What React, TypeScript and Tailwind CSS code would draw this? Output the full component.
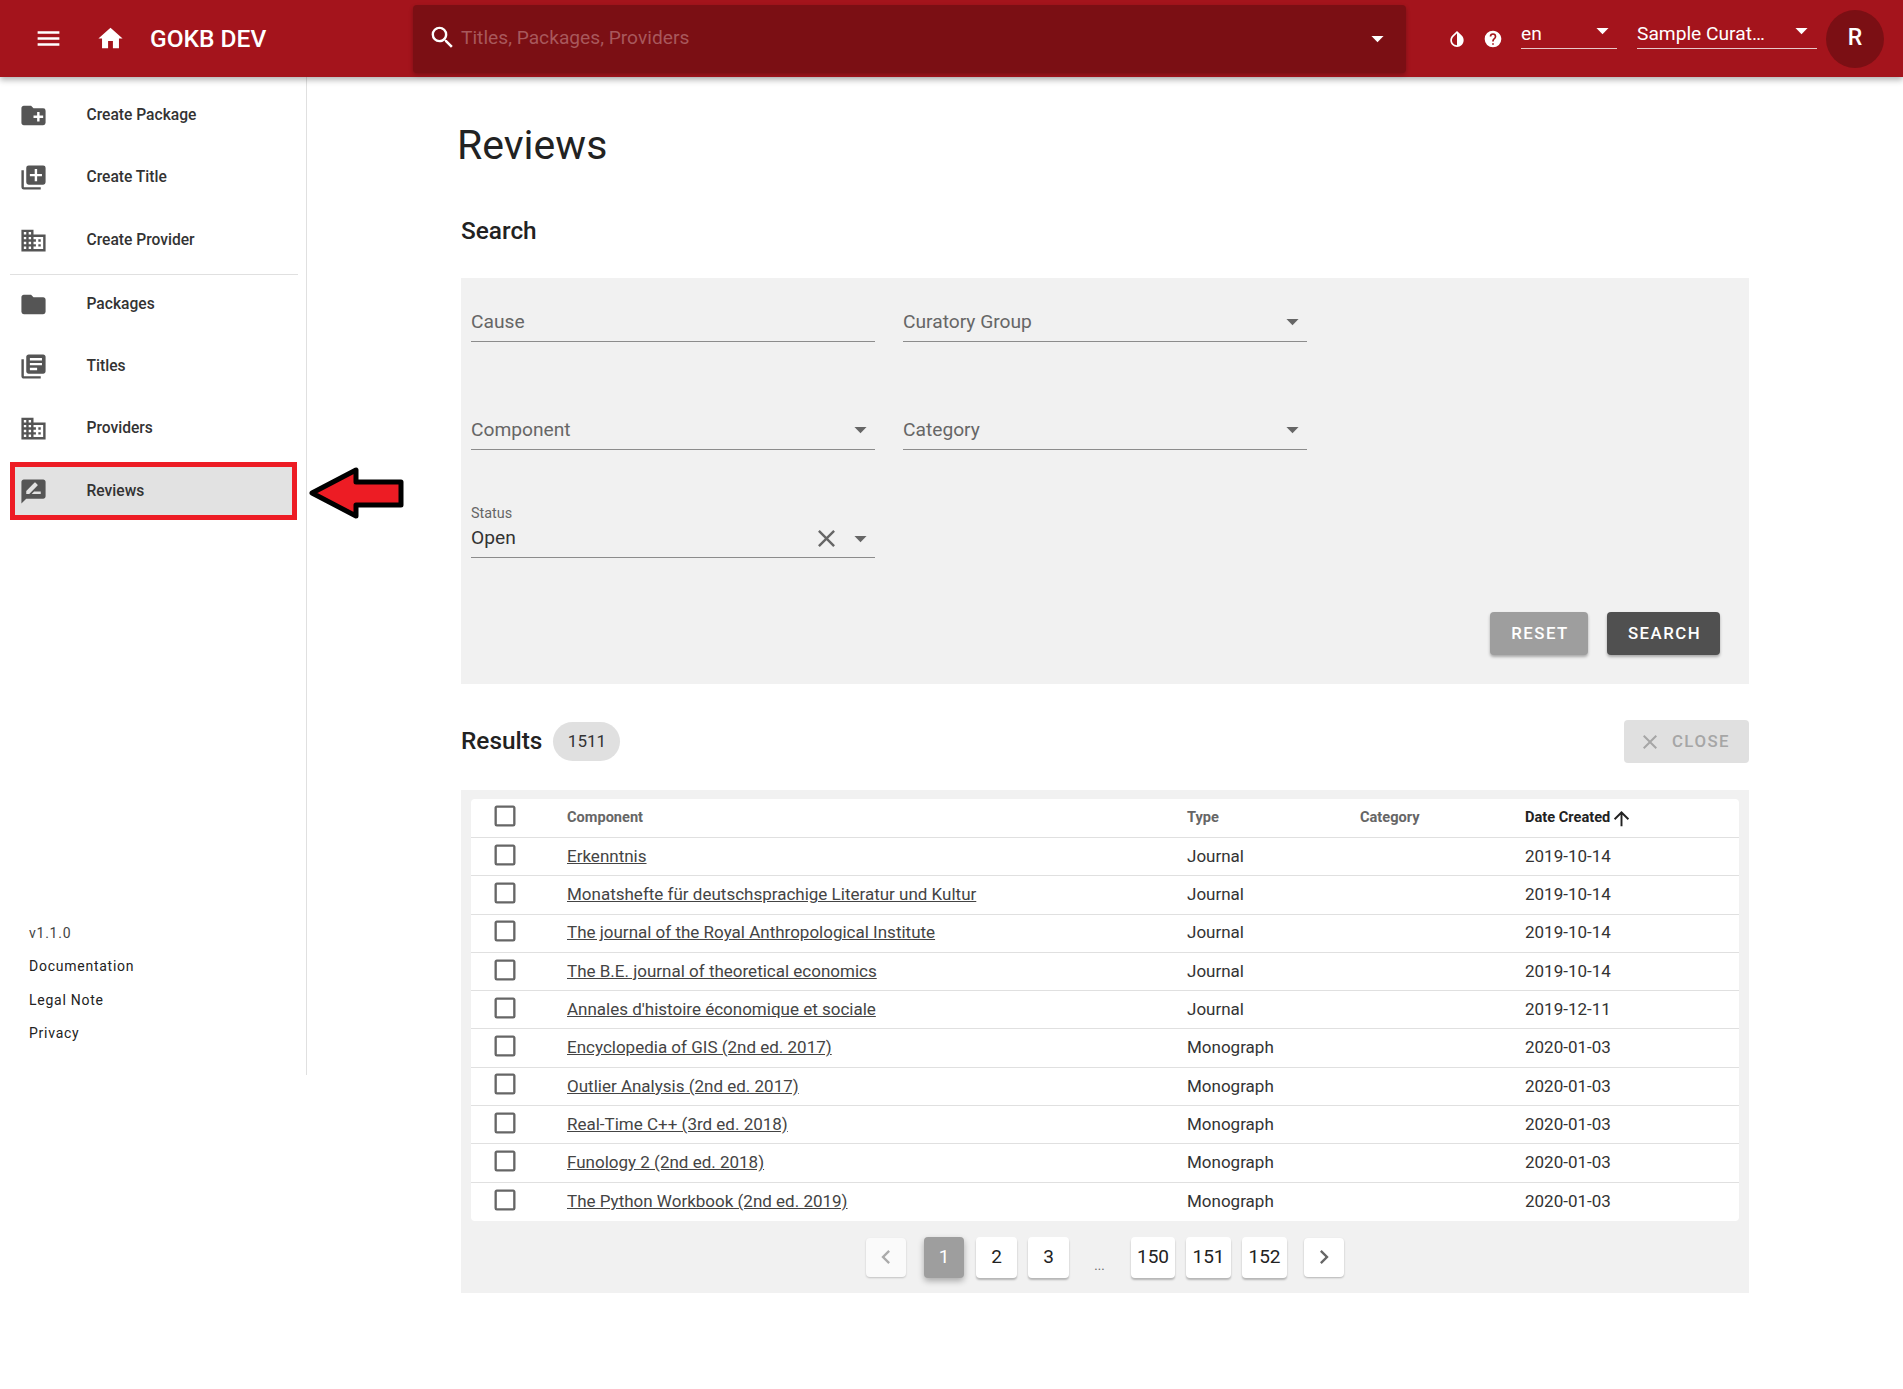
import type { ReactNode } from 'react';

const ICONS = {
  menu: 'M3,6H21V8H3V6M3,11H21V13H3V11M3,16H21V18H3V16Z',
  home: 'M10,20V14H14V20H19V12H22L12,3L2,12H5V20H10Z',
  magnify: 'M9.5,3A6.5,6.5 0 0,1 16,9.5C16,11.11 15.41,12.59 14.44,13.73L14.71,14H15.5L20.5,19L19,20.5L14,15.5V14.71L13.73,14.44C12.59,15.41 11.11,16 9.5,16A6.5,6.5 0 0,1 3,9.5A6.5,6.5 0 0,1 9.5,3M9.5,5C7,5 5,7 5,9.5C5,12 7,14 9.5,14C12,14 14,12 14,9.5C14,7 12,5 9.5,5Z',
  menuDown: 'M7,10L12,15L17,10H7Z',
  folderPlus: 'M10,4L12,6H20A2,2 0 0,1 22,8V18A2,2 0 0,1 20,20H4C2.89,20 2,19.1 2,18V6C2,4.89 2.89,4 4,4H10M15,9V12H12V14H15V17H17V14H20V12H17V9H15Z',
  libraryPlus: 'M19,11H15V15H13V11H9V9H13V5H15V9H19M20,2H8A2,2 0 0,0 6,4V16A2,2 0 0,0 8,18H20A2,2 0 0,0 22,16V4A2,2 0 0,0 20,2M4,6H2V20A2,2 0 0,0 4,22H18V20H4V6Z',
  domain: 'M18,15H16V17H18M18,11H16V13H18M20,19H12V17H14V15H12V13H14V11H12V9H20M10,7H8V5H10M10,11H8V9H10M10,15H8V13H10M10,19H8V17H10M6,7H4V5H6M6,11H4V9H6M6,15H4V13H6M6,19H4V17H6M12,7V3H2V21H22V7H12Z',
  folder: 'M10,4H4C2.89,4 2,4.89 2,6V18A2,2 0 0,0 4,20H20A2,2 0 0,0 22,18V8C22,6.89 21.1,6 20,6H12L10,4Z',
  libraryBooks: 'M4 6H2v14c0 1.1.9 2 2 2h14v-2H4V6zm16-4H8c-1.1 0-2 .9-2 2v12c0 1.1.9 2 2 2h12c1.1 0 2-.9 2-2V4c0-1.1-.9-2-2-2zm-1 9H9V9h10v2zm-4 4H9v-2h6v2zm4-8H9V5h10v2z',
  rateReview: 'M20 2H4c-1.1 0-1.99.9-1.99 2L2 22l4-4h14c1.1 0 2-.9 2-2V4c0-1.1-.9-2-2-2zM6 14v-2.47l6.88-6.88c.2-.2.51-.2.71 0l1.77 1.77c.2.2.2.51 0 .71L8.47 14H6zm12 0h-7.5l2-2H18v2z',
  invert: 'M12,19.58V19.58C10.4,19.58 8.89,18.96 7.76,17.83C6.62,16.69 6,15.19 6,13.58C6,12 6.62,10.47 7.76,9.34L12,5.1M17.66,7.93L12,2.27V2.27L6.34,7.93C3.22,11.05 3.22,16.12 6.34,19.24C7.9,20.8 9.95,21.58 12,21.58C14.05,21.58 16.1,20.8 17.66,19.24C20.78,16.12 20.78,11.05 17.66,7.93Z',
  help: 'M15.07,11.25L14.17,12.17C13.45,12.89 13,13.5 13,15H11V14.5C11,13.39 11.45,12.39 12.17,11.67L13.41,10.41C13.78,10.05 14,9.55 14,9C14,7.89 13.1,7 12,7A2,2 0 0,0 10,9H8A4,4 0 0,1 12,5A4,4 0 0,1 16,9C16,9.88 15.64,10.67 15.07,11.25M13,19H11V17H13M12,2A10,10 0 0,0 2,12A10,10 0 0,0 12,22A10,10 0 0,0 22,12C22,6.47 17.5,2 12,2Z',
  close: 'M19,6.41L17.59,5L12,10.59L6.41,5L5,6.41L10.59,12L5,17.59L6.41,19L12,13.41L17.59,19L19,17.59L13.41,12L19,6.41Z',
  checkbox: 'M19,3H5C3.89,3 3,3.89 3,5V19A2,2 0 0,0 5,21H19A2,2 0 0,0 21,19V5C21,3.89 20.1,3 19,3M19,5V19H5V5H19Z',
  left: 'M15.41,16.58L10.83,12L15.41,7.41L14,6L8,12L14,18L15.41,16.58Z',
  right: 'M8.59,16.58L13.17,12L8.59,7.41L10,6L16,12L10,18L8.59,16.58Z',
  arrowUp: 'M13,20H11V8L5.5,13.5L4.08,12.08L12,4.16L19.92,12.08L18.5,13.5L13,8V20Z',
};

function Icon({ d, className }: { d: string; className?: string }) {
  return (
    <svg viewBox="0 0 24 24" fill="currentColor" className={className}>
      <path d={d} />
    </svg>
  );
}

const NAV_TOP = [
  { label: 'Create Package', icon: ICONS.folderPlus },
  { label: 'Create Title', icon: ICONS.libraryPlus },
  { label: 'Create Provider', icon: ICONS.domain },
];

const NAV_BOTTOM = [
  { label: 'Packages', icon: ICONS.folder },
  { label: 'Titles', icon: ICONS.libraryBooks },
  { label: 'Providers', icon: ICONS.domain },
];

const ROWS = [
  ['Erkenntnis', 'Journal', '2019-10-14'],
  ['Monatshefte für deutschsprachige Literatur und Kultur', 'Journal', '2019-10-14'],
  ['The journal of the Royal Anthropological Institute', 'Journal', '2019-10-14'],
  ['The B.E. journal of theoretical economics', 'Journal', '2019-10-14'],
  ["Annales d'histoire économique et sociale", 'Journal', '2019-12-11'],
  ['Encyclopedia of GIS (2nd ed. 2017)', 'Monograph', '2020-01-03'],
  ['Outlier Analysis (2nd ed. 2017)', 'Monograph', '2020-01-03'],
  ['Real-Time C++ (3rd ed. 2018)', 'Monograph', '2020-01-03'],
  ['Funology 2 (2nd ed. 2018)', 'Monograph', '2020-01-03'],
  ['The Python Workbook (2nd ed. 2019)', 'Monograph', '2020-01-03'],
];

function NavItem({ label, icon, active }: { label: string; icon: string; active?: boolean }) {
  return (
    <a
      className={
        active
          ? 'mx-[10px] mt-px flex h-[58px] w-[287px] items-center gap-[38.5px] border-[5px] border-[#ed1c24] bg-[#e2e2e2] pl-[4px] text-[15.6px] font-medium text-[#333]'
          : 'mx-[10px] mb-1 flex h-[58px] w-[287px] items-center gap-[38.5px] pl-[9px] text-[15.6px] font-medium text-[#333]'
      }
    >
      <Icon d={icon} className="h-[29px] w-[29px] shrink-0 text-[#555]" />
      <span className="translate-y-px">{label}</span>
    </a>
  );
}

function Field({ label, menu }: { label: string; menu?: boolean }) {
  return (
    <div className="flex h-10 w-[404px] items-center justify-between border-b border-[#8c8c8c] text-[19.2px] text-[#666]">
      <span className="translate-y-px">{label}</span>
      {menu && <Icon d={ICONS.menuDown} className="h-[29px] w-[29px] text-[#666]" />}
    </div>
  );
}

function PageButton({ children, active, width }: { children: ReactNode; active?: boolean; width: string }) {
  return (
    <span
      className={
        (active
          ? 'bg-[#9e9e9e] text-white shadow-[0_3px_6px_rgba(0,0,0,0.3)] '
          : 'bg-white text-[#222] shadow-[0_2px_2px_rgba(0,0,0,0.25)] ') +
        width +
        ' flex h-[41px] items-center justify-center rounded-[4px] text-[19px]'
      }
    >
      {children}
    </span>
  );
}

export default function App() {
  return (
    <div className="relative min-h-[1389px] bg-white font-['Roboto',sans-serif] text-[#222]">

      {/* Top bar */}
      <header className="relative z-10 flex h-[77px] items-center bg-[#a4141c] text-white shadow-[0_3px_6px_rgba(0,0,0,0.3)]">
        <Icon d={ICONS.menu} className="ml-[34px] h-[29px] w-[29px]" />
        <Icon d={ICONS.home} className="ml-[33px] h-[29px] w-[29px]" />
        <span className="ml-[25px] w-[263px] translate-y-px text-[24.5px] font-medium">GOKB DEV</span>

        <div className="flex h-[68px] w-[993px] items-center rounded-[4px] bg-[#7b0f14] pl-[15px] pr-[14px] shadow-[0_2px_4px_rgba(0,0,0,0.25)]">
          <Icon d={ICONS.magnify} className="h-[29px] w-[29px] shrink-0 -translate-y-px" />
          <span className="ml-[4px] flex-1 text-[19.2px] text-[#a8585c]">Titles, Packages, Providers</span>
          <Icon d={ICONS.menuDown} className="h-[29px] w-[29px]" />
        </div>

        <Icon d={ICONS.invert} className="ml-[41px] h-[20px] w-[20px]" />
        <Icon d={ICONS.help} className="ml-[16px] h-[20px] w-[20px]" />

        <div className="mb-[14px] ml-[18px] flex h-[34px] w-[96px] items-center justify-between border-b border-[#e8c8c8] pt-[3px] text-[19.2px]">
          <span className="translate-y-[1.5px]">en</span>
          <Icon d={ICONS.menuDown} className="mb-[4px] h-[29px] w-[29px]" />
        </div>
        <div className="mb-[14px] ml-[20px] flex h-[34px] w-[180px] items-center justify-between border-b border-[#e8c8c8] pt-[3px] text-[19.2px]">
          <span className="translate-y-[1.5px]">Sample Curat…</span>
          <Icon d={ICONS.menuDown} className="mb-[4px] mr-[1px] h-[29px] w-[29px]" />
        </div>
        <div className="ml-[9px] flex h-[58px] w-[58px] items-center justify-center rounded-full bg-[#7b0f14] text-[23px] font-medium">R</div>
      </header>

      <div className="flex">

        {/* Side navigation */}
        <nav className="flex h-[998px] w-[307px] shrink-0 flex-col border-r border-[#e0e0e0] pt-[9px]">
          {NAV_TOP.map((item, i) => (
            <div key={item.label} className={i === 2 ? 'mt-px' : ''}>
              <NavItem {...item} />
            </div>
          ))}
          <div className="mx-[10px] mt-px h-px w-[288px] bg-[#e0e0e0]" />
          {NAV_BOTTOM.map(item => <NavItem key={item.label} {...item} />)}
          <NavItem label="Reviews" icon={ICONS.rateReview} active />

          <div className="mt-auto flex flex-col gap-[14.5px] pb-[32px] pl-[29px] text-[14px] leading-[19px] tracking-[0.75px] text-[#222]">
            <span className="text-[#444]">v1.1.0</span>
            <a>Documentation</a>
            <a>Legal Note</a>
            <a>Privacy</a>
          </div>
        </nav>

        {/* Main */}
        <main className="min-w-0 flex-1 px-[154px]">
          <h1 className="-ml-1 mt-[41px] text-[41px] leading-[54px] font-normal">Reviews</h1>
          <h2 className="mt-[43px] text-[24.4px] leading-[32px] font-medium">Search</h2>

          <section className="mt-[31px] h-[406px] bg-[#f1f1f1] pl-[10px] pt-[24px]">
            <div className="grid w-[836px] grid-cols-[404px_404px] gap-x-[28px] gap-y-[68px]">
              <Field label="Cause" />
              <Field label="Curatory Group" menu />
              <Field label="Component" menu />
              <Field label="Category" menu />
              <div className="relative flex h-10 w-[404px] items-center justify-between border-b border-[#8c8c8c] text-[19.2px] text-[#333]">
                <span className="absolute -top-[15px] left-0 text-[14.4px] text-[#666]">Status</span>
                <span className="pt-[2px]">Open</span>
                <div className="flex items-center gap-[5px] pt-[1px] text-[#666]">
                  <Icon d={ICONS.close} className="h-[29px] w-[29px]" />
                  <Icon d={ICONS.menuDown} className="h-[29px] w-[29px]" />
                </div>
              </div>
            </div>
            <div className="mt-[54px] flex justify-end gap-[19px] pr-[29px]">
              <button className="h-[43px] w-[98px] rounded-[4px] bg-[#9e9e9e] pl-[2px] text-[16.8px] font-medium tracking-[1.5px] text-white shadow-[0_2px_3px_rgba(0,0,0,0.3)]">RESET</button>
              <button className="h-[43px] w-[113px] rounded-[4px] bg-[#505050] pl-[2px] text-[16.8px] font-medium tracking-[1.5px] text-white shadow-[0_2px_3px_rgba(0,0,0,0.3)]">SEARCH</button>
            </div>
          </section>

          <div className="mt-[36px] flex h-[43px] items-center">
            <h2 className="text-[24.4px] font-medium">Results</h2>
            <span className="ml-[11px] flex h-[39px] w-[67px] items-center justify-center rounded-full bg-[#e0e0e0] text-[17px] text-[#333]">1511</span>
            <span className="ml-auto flex h-[43px] w-[125px] items-center justify-center gap-[10px] rounded-[4px] bg-[#e0e0e0] pr-[5px] text-[16.8px] font-medium tracking-[1.5px] text-[#a6a6a6]">
              <Icon d={ICONS.close} className="h-[24px] w-[24px]" />
              CLOSE
            </span>
          </div>

          <section className="mt-[27px] h-[503px] bg-[#f1f1f1] px-[10px] pt-[9px]">
            <div className="rounded-[4px] bg-white">
              <div className="grid h-[39px] grid-cols-[96px_620px_173px_165px_1fr] items-center border-b border-[#e0e0e0] text-[14.6px] font-bold text-[#666]">
                <Icon d={ICONS.checkbox} className="ml-[20px] h-[28px] w-[28px] -translate-y-[2px] text-[#666]" />
                <span>Component</span>
                <span>Type</span>
                <span>Category</span>
                <span className="flex items-center text-[#222]">
                  Date Created
                  <Icon d={ICONS.arrowUp} className="h-[23px] w-[23px]" />
                </span>
              </div>
              {ROWS.map(([name, type, date], i) => (
                <div
                  key={name}
                  className={
                    'grid h-[38.3px] grid-cols-[96px_620px_173px_165px_1fr] items-center text-[17px] text-[#333]' +
                    (i < ROWS.length - 1 ? ' border-b border-[#e0e0e0]' : '')
                  }
                >
                  <Icon d={ICONS.checkbox} className="ml-[20px] h-[28px] w-[28px] -translate-y-[2px] text-[#666]" />
                  <a className="text-[#444] underline">{name}</a>
                  <span>{type}</span>
                  <span />
                  <span>{date}</span>
                </div>
              ))}
            </div>

            {/* Pagination */}
            <div className="mt-[16px] flex items-center justify-center">
              <span className="flex h-[39px] w-[40px] items-center justify-center rounded-[4px] bg-[#fafafa] text-[#aaa] shadow-[0_1px_2px_rgba(0,0,0,0.2)]">
                <Icon d={ICONS.left} className="h-[28px] w-[28px]" />
              </span>
              <div className="ml-[18px] mr-[12px]"><PageButton active width="w-[40px]">1</PageButton></div>
              <div className="mr-[11px]"><PageButton width="w-[41px]">2</PageButton></div>
              <PageButton width="w-[41px]">3</PageButton>
              <span className="ml-[24px] mr-[25px] w-[13px] pt-[16px] text-center text-[13px] leading-none text-[#666]">...</span>
              <PageButton width="w-[44px]">150</PageButton>
              <div className="ml-[11px] mr-[11px]"><PageButton width="w-[45px]">151</PageButton></div>
              <PageButton width="w-[45px]">152</PageButton>
              <span className="ml-[17px] flex h-[39px] w-[40px] items-center justify-center rounded-[4px] bg-white text-[#666] shadow-[0_1px_2px_rgba(0,0,0,0.25)]">
                <Icon d={ICONS.right} className="h-[28px] w-[28px]" />
              </span>
            </div>
          </section>
        </main>
      </div>

      {/* Annotation arrow */}
      <svg viewBox="0 0 96 54" className="absolute left-[308px] top-[466px] h-[54px] w-[96px]">
        <path d="M4 27 L48 4 V16 H93 V39 H48 V50 Z" fill="#ed1c24" stroke="#000" strokeWidth="5" strokeLinejoin="round" />
      </svg>
    </div>
  );
}
